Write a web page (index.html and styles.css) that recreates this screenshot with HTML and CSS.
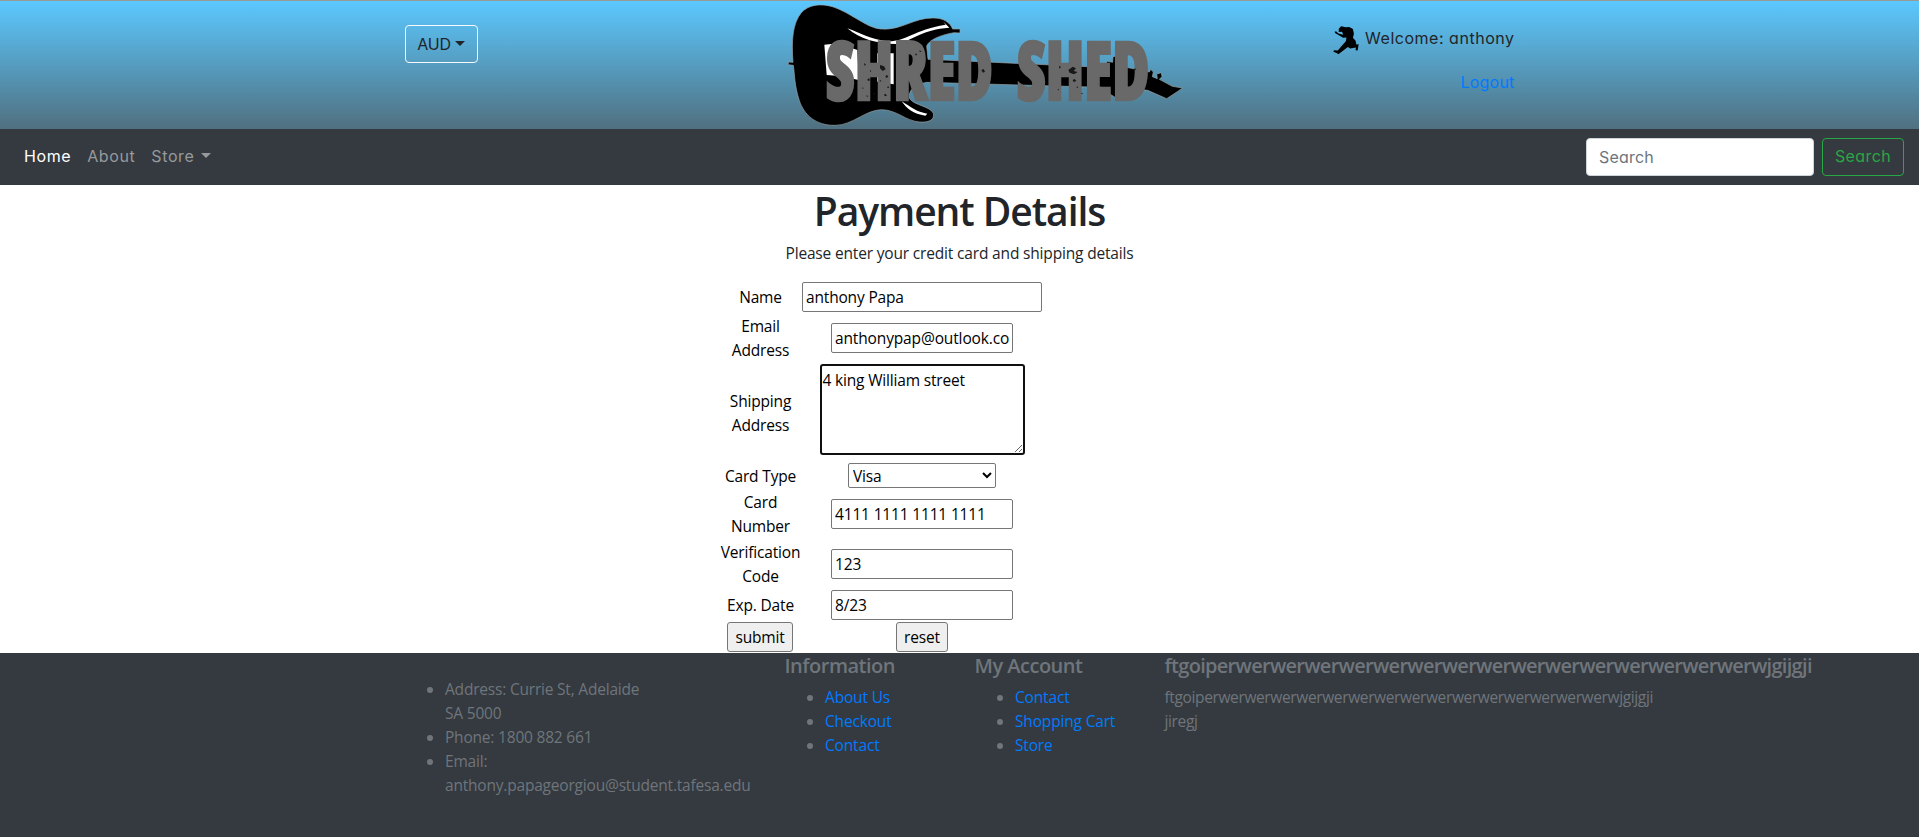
FILE: index.html
```html
<!DOCTYPE html>
<html lang="en">
<head>
<meta charset="utf-8">
<title>Shred Shed - Payment Details</title>
<link rel="stylesheet" href="styles.css">
</head>
<body>
<header class="banner">
  <div class="container banner-grid">
    <div><button class="currency" type="button">AUD<span class="caret"></span></button></div>
    <svg class="logo" viewBox="0 3 1290 384" role="img" aria-label="Shred Shed">
      <path fill="#000" stroke="#9aa5aa" stroke-width="2" d="M55 186L69 187C64 120 68 70 94 38C117 12 155 11 187 20C240 36 290 84 332 87C395 92 430 53 490 54C522 54 540 68 548 87L570 87V99L552 98C510 105 477 120 470 138L474 178L955 200L1008 190L1012 184L1028 187L1029 170L1040 168L1042 184L1036 195L1138 216L1142 208L1150 216L1147 230L1162 236L1160 222L1174 218L1176 230L1168 238L1207 259L1238 264L1222 275L1190 296L1133 271L1045 262L1037 293L1003 272L995 262L470 247C430 254 413 275 419 296C434 317 480 318 490 340C495 361 474 368 448 366C405 362 382 330 335 329C285 330 250 375 196 376C135 377 102 343 88 302C73 257 74 220 70 196L55 194Z"/>
      <path fill="#fff" d="M232 85C270 98 305 120 355 124C410 123 430 90 527 74L519 64L538 83C458 88 430 119 382 132C330 133 270 119 232 85ZM163 134L205 130L262 150L266 240L210 228L170 225ZM322 160L371 160V253L322 245ZM395 304C420 319 440 337 472 341L466 347C430 343 409 325 395 304Z"/>
      <text class="logo-text" x="168" y="300" textLength="970" lengthAdjust="spacingAndGlyphs">SHRED SHED</text>
      <g fill="#181818">
        <path d="M282 190l6 3-4 5zM292 238l5-3 3 6-6 2zM277 262l4 2-3 4zM330 195l12 4 5 9-9 5-8-8zM346 228l5-3 4 5-6 4zM310 278l5 2-3 5zM342 284l4-3 5 6-6 2zM288 288l4-2 3 5zM436 160l6 3-5 4zM449 150l5 5-5 2zM350 262l5-3 3 6zM300 210l4 3-4 3zM328 243l4-3 2 5zM634 210l7-3 4 8-6 3zM867 197l6 4-5 5zM882 235l4-3 3 4zM895 210l13-10 10 5-7 8 12 3-11 7-13-5zM908 240l6-3 5 6-8 3zM932 280l4-2 3 5zM862 270l3-3 3 4zM919 262l3-3 3 6zM1090 208l5-3 4 6z"/>
      </g>
    </svg>
    <div class="account">
      <div class="welcome">
        <svg class="runner" viewBox="0 0 80 86"><path d="M17 8L24 1L38 4L48 3L59 9L62 23L59 35L67 44L69 55L76 54L73 73L67 72L68 64L51 67L44 62L16 84L11 80L1 76L3 72L14 73L38 45L40 34L30 35L6 21L5 16L10 16L16 22L30 26L27 17L17 18Z"/></svg>
        <span>Welcome: anthony</span>
      </div>
      <a class="logout" href="#">Logout</a>
    </div>
  </div>
</header>
<nav class="navbar">
  <a class="active" href="#">Home</a>
  <a href="#">About</a>
  <a href="#">Store <span class="caret"></span></a>
  <form class="search">
    <input type="search" placeholder="Search" aria-label="Search">
    <button type="button">Search</button>
  </form>
</nav>
<main>
  <h1>Payment Details</h1>
  <p class="lead">Please enter your credit card and shipping details</p>
  <form class="payment">
    <label for="name">Name</label><input id="name" class="wide" value="anthony Papa">
    <label for="email">Email<br>Address</label><input id="email" value="anthonypap@outlook.co">
    <label for="address">Shipping<br>Address</label><textarea id="address">4 king William street</textarea>
    <label for="type">Card Type</label><select id="type"><option>Visa</option></select>
    <label for="number">Card<br>Number</label><input id="number" value="4111 1111 1111 1111">
    <label for="code">Verification<br>Code</label><input id="code" value="123">
    <label for="exp">Exp. Date</label><input id="exp" value="8/23">
    <button type="button">submit</button><button type="button">reset</button>
  </form>
</main>
<footer>
  <div class="container footer-grid">
    <ul class="contact">
      <li>Address: Currie St, Adelaide<br>SA 5000</li>
      <li>Phone: 1800 882 661</li>
      <li>Email:<br>anthony.papageorgiou@student.tafesa.edu</li>
    </ul>
    <section>
      <h5>Information</h5>
      <ul><li><a href="#">About Us</a></li><li><a href="#">Checkout</a></li><li><a href="#">Contact</a></li></ul>
    </section>
    <section>
      <h5>My Account</h5>
      <ul><li><a href="#">Contact</a></li><li><a href="#">Shopping Cart</a></li><li><a href="#">Store</a></li></ul>
    </section>
    <section class="blurb">
      <h5>ftgoiperwerwerwerwerwerwerwerwerwerwerwerwerwerwerwerwjgijgji</h5>
      <p>ftgoiperwerwerwerwerwerwerwerwerwerwerwerwerwerwerwerwjgijgji<br>jiregj</p>
    </section>
  </div>
</footer>
</body>
</html>
```
FILE: styles.css
```css
* { box-sizing: border-box; }
body { margin: 0; height: 837px; overflow: hidden; display: flex; flex-direction: column; background: #fff; color: #212529; font: 15.5px/24px "Open Sans", sans-serif; letter-spacing: -0.17px; }
a { color: #007bff; text-decoration: none; }
.container { width: 1110px; margin: 0 auto; }
.caret { display: inline-block; margin-left: 4px; vertical-align: 4px; border: 5px solid transparent; border-top-color: currentColor; border-bottom: 0; }

.banner, .navbar { font-family: Inter, sans-serif; font-size: 16px; font-feature-settings: "cv11"; letter-spacing: 0.2px; }
.banner { flex: none; height: 129px; border-top: 1px solid #999; background: linear-gradient(#5bc8ff, #50707f); }
.banner-grid { display: grid; grid-template-columns: 365.5px 430px 1fr; }
.currency { margin-top: 24px; width: 73px; height: 38px; padding: 0; border: 1px solid #f8f9fa; border-radius: 4px; background: none; color: #212529; font: inherit; letter-spacing: -0.3px; }
.logo { width: 430px; height: 128px; }
.logo-text { font: 800 246px "Open Sans", sans-serif; font-stretch: 75%; letter-spacing: 0; word-spacing: 50px; fill: #696969; stroke: #696969; stroke-width: 8px; }
.account { text-align: right; }
.welcome { display: flex; justify-content: flex-end; align-items: flex-start; margin-top: 25px; height: 44px; letter-spacing: 0.52px; }
.runner { width: 27px; height: 29px; margin-right: 5px; }
.logout { display: block; }

.navbar { flex: none; height: 56px; padding: 0 15px 0 24px; display: flex; align-items: center; gap: 16px; background: #343a40; }
.navbar > a { color: #97999c; padding-bottom: 2px; letter-spacing: 0.6px; }
.navbar > a .caret { margin-left: 2px; }
.navbar > a.active { color: #fff; }
.search { margin-left: auto; display: flex; gap: 8px; }
.search input { width: 228px; height: 38px; padding: 0 12px; border: 1px solid #ced4da; border-radius: 4px; font: inherit; letter-spacing: inherit; }
.search input::placeholder { color: #6c757d; }
.search button { width: 82px; height: 38px; padding: 0 0 2px; border: 1px solid #28a745; border-radius: 4px; background: none; color: #28a745; font: inherit; letter-spacing: 0.4px; }

main { flex: none; height: 468px; }
h1 { margin: 0; padding-top: 2px; height: 56px; text-align: center; font-size: 39px; line-height: 48px; font-weight: 600; letter-spacing: -1.05px; }
.lead { margin: 0 0 17px; text-align: center; }
.payment { width: 322px; margin-left: 720px; display: grid; grid-template-columns: 80px 240px; grid-template-rows: 30px 48px 97px 25px 48px 48px 30px 30px; gap: 2px; align-items: center; justify-items: center; text-align: center; color: #000; }
.payment input, .payment textarea, .payment select, .payment button { font: inherit; letter-spacing: inherit; color: #000; border: 1px solid #767676; border-radius: 2px; }
.payment label { padding-left: 1px; }
.payment input { width: 182px; height: 30px; padding: 1px 3px; }
.payment #email { letter-spacing: -0.14px; }
.payment .wide { width: 240px; }
.payment textarea { align-self: start; width: 205px; height: 91px; padding: 2px 1px; border: 2px solid #101010; border-radius: 3px; }
.payment select { width: 148px; height: 25px; padding: 0; background: #fff; }
.payment button { height: 30px; padding: 1px 7px; background: #efefef; border-radius: 3px; }

footer { flex: 1; background: #343a40; color: #6f757b; }
.footer-grid { display: grid; grid-template-columns: 380px 190px 190px 350px; }
footer h5 { margin: 0; padding-top: 1px; height: 32px; font-size: 20px; line-height: 24px; font-weight: 600; letter-spacing: -0.5px; }
footer ul { margin: 0; padding-left: 40.5px; }
footer .contact { margin-top: 24px; letter-spacing: -0.2px; }
.blurb h5 { letter-spacing: -0.7px; }
.blurb p { margin: 0; white-space: nowrap; letter-spacing: -0.37px; }
```
